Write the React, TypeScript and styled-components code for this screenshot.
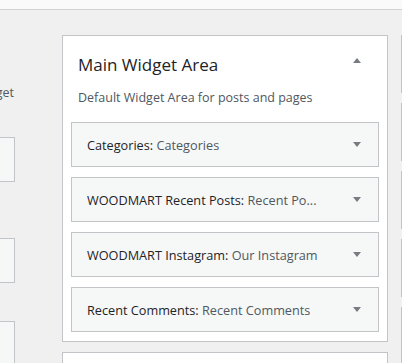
import styled, { createGlobalStyle } from 'styled-components';

const GlobalStyle = createGlobalStyle`
    html, body {
        margin: 0;
        padding: 0;
        background-color: #f0f0f1;
        font-family: "Open Sans", "Noto Sans", sans-serif;
        font-size: 13px;
        color: #3c434a;
    }
`;

const Page = styled.div`
    width: 402px;
    height: 363px;
    overflow: hidden;
    display: flex;
    flex-direction: column;
`;

const TopStrip = styled.div`
    height: 9px;
    flex-shrink: 0;
    background-color: #fafafa;
    border-bottom: 1px solid #d2d2d2;
`;

const Columns = styled.div`
    display: flex;
    align-items: flex-start;
    padding-top: 25px;
`;

// available widgets, mostly scrolled off to the left
const LeftCol = styled.div`
    flex-shrink: 0;
    width: 300px;
    margin-left: -285px;
`;

const Intro = styled.p`
    margin: 48px 0 0;
    line-height: 19px;
    font-size: 12.5px;
    text-align: right;
    white-space: nowrap;
    padding-right: 1px;
    color: #50575e;
`;

interface SpaceProps {
    space: number;
}
const AvailableWidget = styled.div<SpaceProps>`
    margin-top: ${({ space }) => space}px;
    height: 43px;
    background-color: #f6f7f7;
    border: 1px solid #c3c4c7;
`;

const MainCol = styled.div`
    flex-shrink: 0;
    width: 326px;
    margin-left: 47px;
    display: flex;
    flex-direction: column;
    gap: 10px;
`;

const Sidebar = styled.div`
    background-color: #fff;
    border: 1px solid #c3c4c7;
    padding: 0 8px 9px;
`;

const SidebarHeader = styled.div`
    display: flex;
    justify-content: space-between;
    align-items: flex-start;
    padding: 15px 18px 0 7px;
`;

const SidebarTitle = styled.h2`
    margin: 0;
    font-size: 17px;
    font-weight: 500;
    line-height: 27px;
    color: #1d2327;
`;

interface ArrowProps {
    up?: boolean;
}
const Arrow = styled.span<ArrowProps>`
    display: block;
    flex-shrink: 0;
    width: 0;
    height: 0;
    border-left: 4px solid transparent;
    border-right: 4px solid transparent;
    ${({ up }) =>
        up
            ? `
            border-bottom: 5px solid #787c82;
            margin-top: 7px;
        `
            : `
            border-top: 5px solid #787c82;
        `}
`;

const Description = styled.p`
    margin: 10px 0 15px 7px;
    line-height: 19px;
    font-size: 12.5px;
    color: #50575e;
`;

const WidgetList = styled.div`
    display: flex;
    flex-direction: column;
    gap: 10px;
`;

const WidgetTop = styled.div`
    height: 43px;
    display: flex;
    align-items: center;
    justify-content: space-between;
    padding: 0 17px 0 15px;
    background-color: #f6f7f7;
    border: 1px solid #c3c4c7;
`;

const WidgetTitle = styled.h3`
    margin: 0;
    font-size: 12.7px;
    font-weight: 500;
    color: #1d2327;
    white-space: nowrap;
    overflow: hidden;
`;

const InWidgetTitle = styled.span`
    font-weight: 400;
    color: #50575e;
`;

const NextSidebar = styled.div`
    height: 40px;
    background-color: #fff;
    border: 1px solid #c3c4c7;
`;

const RightCol = styled.div`
    flex-shrink: 0;
    width: 200px;
    margin-left: 13px;
    display: flex;
    flex-direction: column;
    gap: 10px;
`;

const RightBox = styled.div`
    height: 56px;
    background-color: #f6f7f7;
    border: 1px solid #c3c4c7;
`;

const WIDGETS = [
    { name: 'Categories', title: 'Categories' },
    { name: 'WOODMART Recent Posts', title: 'Recent Po...' },
    { name: 'WOODMART Instagram', title: 'Our Instagram' },
    { name: 'Recent Comments', title: 'Recent Comments' }
];

function App() {
    return (
        <Page>
            <GlobalStyle />
            <TopStrip />
            <Columns>
                <LeftCol>
                    <Intro>drag it back to deactivate a widget</Intro>
                    <AvailableWidget space={35} />
                    <AvailableWidget space={56} />
                    <AvailableWidget space={38} />
                </LeftCol>

                <MainCol>
                    <Sidebar>
                        <SidebarHeader>
                            <SidebarTitle>Main Widget Area</SidebarTitle>
                            <Arrow up />
                        </SidebarHeader>
                        <Description>
                            Default Widget Area for posts and pages
                        </Description>
                        <WidgetList>
                            {WIDGETS.map((widget, index) => (
                                <WidgetTop key={index}>
                                    <WidgetTitle>
                                        {widget.name}:{' '}
                                        <InWidgetTitle>
                                            {widget.title}
                                        </InWidgetTitle>
                                    </WidgetTitle>
                                    <Arrow />
                                </WidgetTop>
                            ))}
                        </WidgetList>
                    </Sidebar>
                    <NextSidebar />
                </MainCol>

                <RightCol>
                    {[0, 1, 2, 3, 4].map((i) => (
                        <RightBox key={i} />
                    ))}
                </RightCol>
            </Columns>
        </Page>
    );
}

export default App;
